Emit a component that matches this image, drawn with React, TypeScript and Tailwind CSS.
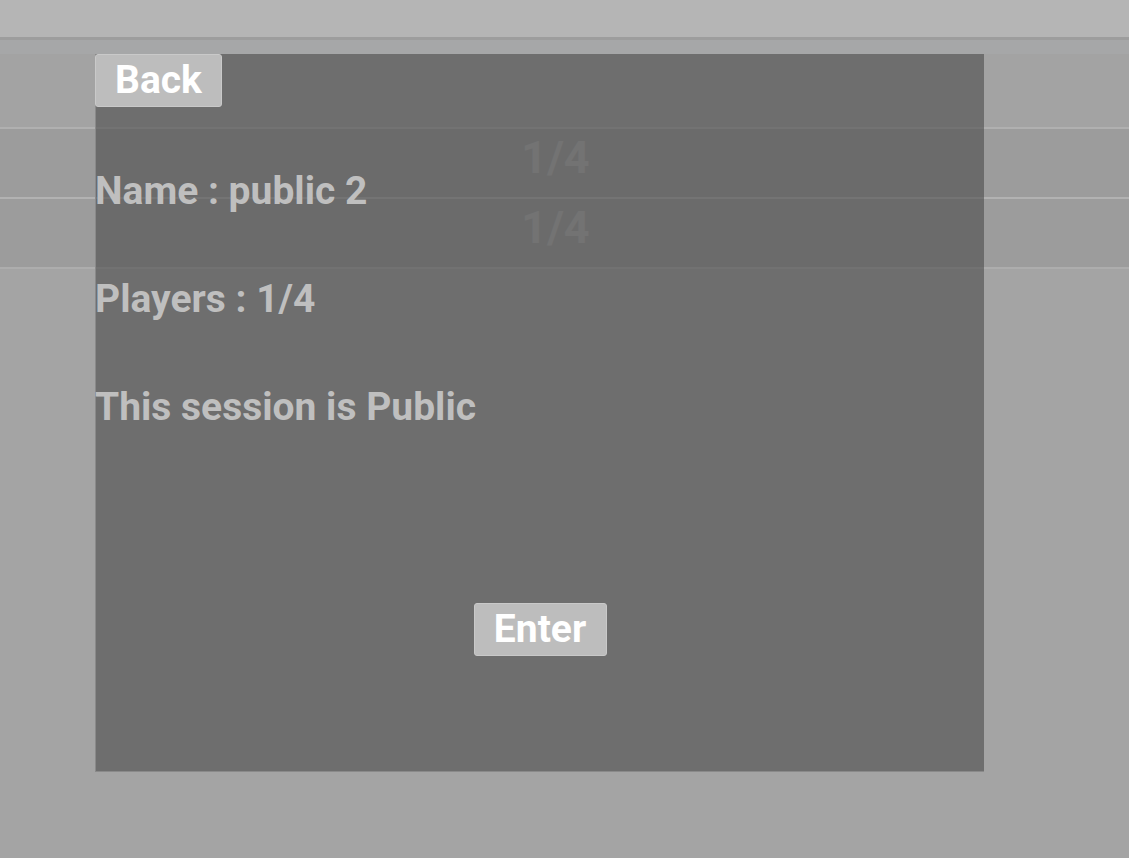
import React from "react";

export default function App() {
  return (
    <div
      className="relative w-full h-[858px] overflow-hidden bg-[#a4a4a4]"
      style={{ fontFamily: "Roboto, 'Noto Sans', sans-serif" }}
    >
      {/* background list */}
      <div className="flex flex-col">
        <div className="h-[37px] bg-[#b5b5b5]" />
        <div className="h-[3px] bg-[#9d9d9d]" />
        <div className="h-[14px] bg-[#a6a7a8]" />
        <div className="h-[73px] bg-[#a3a3a3]" />
        <div className="h-[2px] bg-[#b0b0b0]" />
        <div className="h-[68px] bg-[#9c9c9c] flex items-center justify-center">
          <span className="font-bold text-[45px] leading-none text-[#b1b1b1] ml-[-18px] mb-[12px]">1/4</span>
        </div>
        <div className="h-[2px] bg-[#b2b2b2]" />
        <div className="h-[68px] bg-[#9c9c9c] flex items-center justify-center">
          <span className="font-bold text-[45px] leading-none text-[#b1b1b1] ml-[-18px] mb-[12px]">1/4</span>
        </div>
        <div className="h-[2px] bg-[#adadad]" />
      </div>

      {/* modal */}
      <div className="absolute left-[95px] top-[54px] w-[889px] h-[718px] bg-[rgba(79,79,79,0.63)] border-l border-b border-[#8a8a8a] flex flex-col">
        <button className="self-start ml-[-1px] w-[127px] h-[53px] rounded-[3px] bg-[#bdbdbd] border border-[#c9c9c9] flex items-center justify-center text-white font-bold text-[39px] leading-none">
          Back
        </button>
        <div className="mt-[66px] flex flex-col gap-[72px] text-[#bfbfbf] font-bold text-[39px] leading-[36px] ml-[-1px]">
          <p>Name : public 2</p>
          <p>Players : 1/4</p>
          <p>This session is Public</p>
        </div>
        <button className="self-center mt-[178px] w-[133px] h-[53px] rounded-[3px] bg-[#bdbdbd] border border-[#c9c9c9] flex items-center justify-center text-white font-bold text-[39px] leading-none">
          Enter
        </button>
      </div>
    </div>
  );
}
